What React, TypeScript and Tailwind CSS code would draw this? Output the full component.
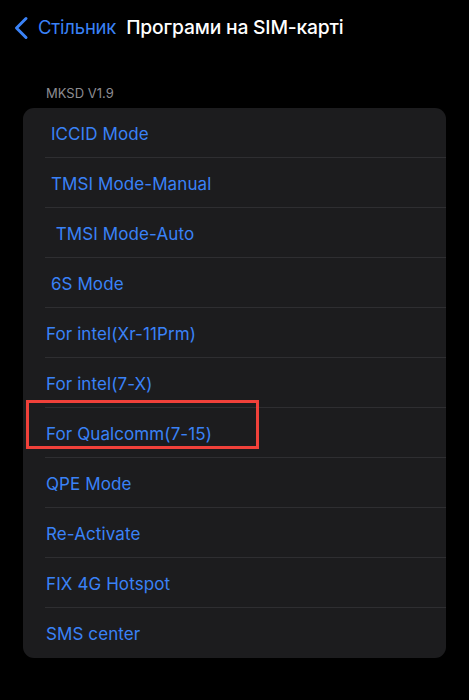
// SIM applications list (iOS dark settings style)
const items = [
  " ICCID Mode",
  " TMSI Mode-Manual",
  "  TMSI Mode-Auto",
  " 6S Mode",
  "For intel(Xr-11Prm)",
  "For intel(7-X)",
  "For Qualcomm(7-15)",
  "QPE Mode",
  "Re-Activate",
  "FIX 4G Hotspot",
  "SMS center",
];

export default function App() {
  return (
    <div
      className="w-[469px] h-[700px] bg-black overflow-hidden"
      style={{ fontFamily: "Inter, 'Liberation Sans', sans-serif" }}
    >
      {/* nav bar */}
      <div className="h-[55px] flex items-center pl-[13px]">
        <svg width="16" height="24" viewBox="0 0 16 24" className="shrink-0">
          <polyline
            points="13,2.5 3.5,12 13,21.5"
            fill="none"
            stroke="#3a82f7"
            strokeWidth="3"
            strokeLinecap="round"
            strokeLinejoin="round"
          />
        </svg>
        <span className="ml-[9px] text-[18.5px] text-[#3a82f7] tracking-[-0.2px]">Стільник</span>
        <span className="ml-[10px] text-[19.3px] font-medium text-white tracking-[-0.2px]">
          Програми на SIM-карті
        </span>
      </div>

      <div className="pt-[30px] px-[23px]">
        <div className="pl-[23px] text-[13px] text-[#8d8d92] leading-[16px]">MKSD V1.9</div>
        <div className="mt-[7px] w-[423px] rounded-[11px] bg-[#1c1c1e]">
          {items.map((t, i) => (
            <div key={i} className="relative h-[50px] flex items-center pl-[23px] pt-[3px]">
              <span className="whitespace-pre text-[17px] text-[#3a82f7] tracking-[0.1px]">{t}</span>
              {i < items.length - 1 && (
                <div className="absolute left-[22px] right-0 bottom-0 h-px bg-[#2e2e31]" />
              )}
              {t.startsWith("For Qualcomm") && (
                <div className="absolute left-[3px] top-[-8px] w-[233px] h-[49px] border-[3px] border-[#f1413a]" />
              )}
            </div>
          ))}
        </div>
      </div>
    </div>
  );
}
